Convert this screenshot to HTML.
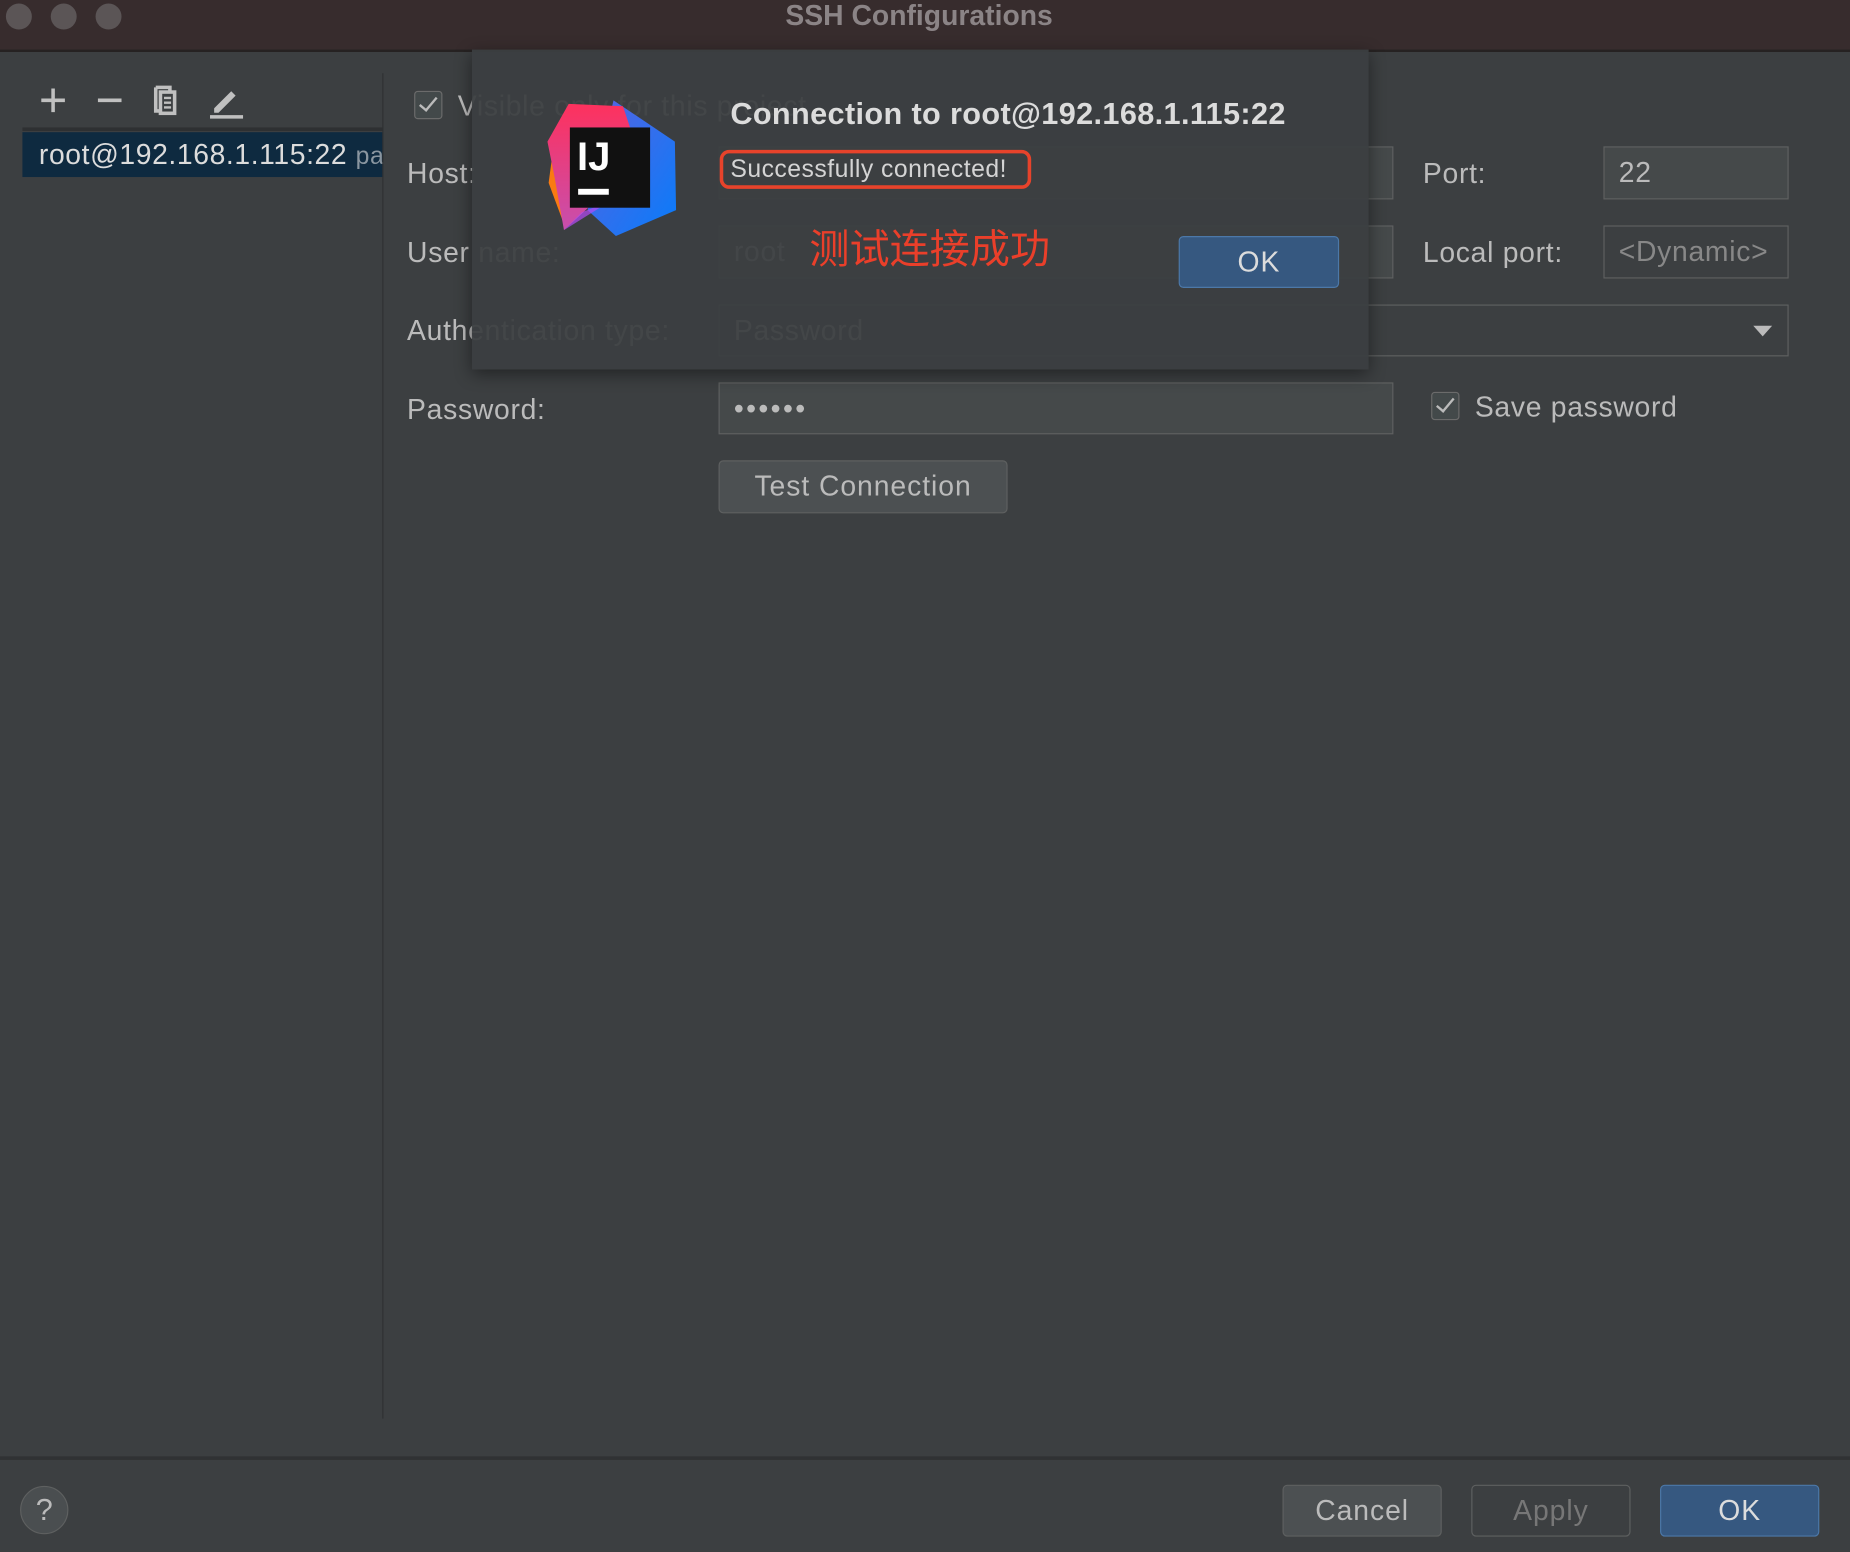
<!DOCTYPE html>
<html><head><meta charset="utf-8"><style>
html,body{margin:0;padding:0;width:1850px;height:1552px;overflow:hidden;background:#3c3f41;}
#s{position:absolute;left:0;top:0;width:1568px;height:1315px;transform:scale(1.17985,1.1802);transform-origin:0 0;background:#3c3f41;font-family:"Liberation Sans","Noto Sans CJK SC",sans-serif;color:#bbbbbb;}
.a{position:absolute;}
.lbl{position:absolute;font-size:24px;line-height:28px;color:#bbbbbb;letter-spacing:0.6px;}
.fld{position:absolute;background:#45494a;border:1.5px solid #5e6060;box-sizing:border-box;font-size:24px;line-height:44px;padding-left:12px;color:#bbbbbb;letter-spacing:0.6px;}
.btn{position:absolute;box-sizing:border-box;border:1.5px solid #5e6060;border-radius:4px;background:#4c5052;font-size:24px;text-align:center;line-height:43px;color:#bbbbbb;letter-spacing:0.8px;}
.cb{position:absolute;width:24px;height:24px;border:1.5px solid #6b6b6b;border-radius:3px;background:#43494a;box-sizing:border-box;}
.cb:after{content:"";position:absolute;left:7px;top:1px;width:6px;height:13px;border-right:2px solid #bbb;border-bottom:2px solid #bbb;transform:rotate(40deg);}
</style></head><body><div id="s">
<div class="a" style="left:0;top:0;width:1568px;height:42px;background:#372c2d;border-bottom:2px solid #262222;"></div>
<div class="a" style="left:5px;top:3px;width:22px;height:22px;border-radius:50%;background:#5b5556"></div>
<div class="a" style="left:43px;top:3px;width:22px;height:22px;border-radius:50%;background:#5b5556"></div>
<div class="a" style="left:81px;top:3px;width:22px;height:22px;border-radius:50%;background:#5b5556"></div>
<div class="a" style="left:0;top:0;width:1558px;text-align:center;font-size:24px;font-weight:bold;line-height:28px;color:#8b8486">SSH Configurations</div>

<svg class="a" style="left:30px;top:70px" width="190" height="32" viewBox="0 0 190 32">
<g stroke="#c0c0c0" stroke-width="3" fill="none">
<path d="M5 15h20M15 5v20"/><path d="M53 15h20"/>
<path d="M102 4h12v3M102 4v20h3"/>
<rect x="106" y="8" width="12" height="18" fill="#3c3f41"/>
<path d="M109 13h6M109 17h6M109 21h6" stroke-width="2"/>
<path d="M152 22l14-14 3 3-14 14h-3z" fill="#c0c0c0" stroke-width="1"/>
<path d="M148 29h28"/>
</g></svg>
<div class="a" style="left:19px;top:108px;width:306px;height:3px;background:#2e3032"></div>
<div class="a" style="left:19px;top:112px;width:306px;height:38px;background:#0e2a40;overflow:hidden;white-space:nowrap;font-size:24px;line-height:40px;color:#dcdcdc;padding-left:14px;box-sizing:border-box;letter-spacing:0.5px">root@192.168.1.115:22 <span style="color:#8a96a0;font-size:21px">password</span></div>
<div class="a" style="left:324px;top:62px;width:1px;height:1140px;background:#2f3133"></div>

<div class="cb" style="left:351px;top:77px"></div>
<div class="lbl" style="left:388px;top:77px">Visible only for this project</div>
<div class="lbl" style="left:345px;top:134px">Host:</div>
<div class="fld" style="left:609px;top:124px;width:572px;height:45px"></div>
<div class="lbl" style="left:1206px;top:134px">Port:</div>
<div class="fld" style="left:1359px;top:124px;width:157px;height:45px">22</div>
<div class="lbl" style="left:345px;top:201px">User name:</div>
<div class="fld" style="left:609px;top:191px;width:572px;height:45px">root</div>
<div class="lbl" style="left:1206px;top:201px">Local port:</div>
<div class="fld" style="left:1359px;top:191px;width:157px;height:45px;background:#3c3f41;color:#888">&lt;Dynamic&gt;</div>
<div class="lbl" style="left:345px;top:267px">Authentication type:</div>
<div class="fld" style="left:609px;top:258px;width:907px;height:44px;background:#3c3f41">Password</div>
<div class="a" style="left:1486px;top:276px;width:0;height:0;border-left:8px solid transparent;border-right:8px solid transparent;border-top:9px solid #bbb"></div>
<div class="lbl" style="left:345px;top:334px">Password:</div>
<div class="fld" style="left:609px;top:324px;width:572px;height:44px;letter-spacing:2px">••••••</div>
<div class="cb" style="left:1213px;top:332px"></div>
<div class="lbl" style="left:1250px;top:332px">Save password</div>
<div class="btn" style="left:609px;top:390px;width:245px;height:45px">Test Connection</div>

<div class="a" style="left:400px;top:42px;width:760px;height:271px;background:rgba(60,63,65,0.94);box-shadow:0 4px 14px rgba(0,0,0,0.45)"></div>
<svg class="a" style="left:458px;top:80px" width="120" height="122" viewBox="0 0 120 122">
<defs><linearGradient id="g1" x1="0" y1="0" x2="1" y2="1"><stop offset="0" stop-color="#5a62e0"/><stop offset="1" stop-color="#087cfa"/></linearGradient>
<linearGradient id="g2" x1="0" y1="0" x2="0" y2="1"><stop offset="0" stop-color="#fe315d"/><stop offset="1" stop-color="#c74fae"/></linearGradient></defs>
<polygon points="62,5 114,40 115,98 64,120 40,98" fill="url(#g1)"/>
<polygon points="11,45 7,75 20,110 55,85" fill="#f97a12"/>
<polygon points="24,8 70,10 85,55 20,115 12,70 6,40" fill="url(#g2)"/>
<polygon points="35,100 20,115 60,90" fill="#b74af7" opacity=".7"/>
<rect x="25" y="28" width="68" height="68" fill="#111"/>
<text x="31" y="64" font-family="Liberation Sans" font-weight="bold" font-size="34" fill="#fff">IJ</text>
<rect x="32" y="80" width="26" height="5" fill="#fff"/>
</svg>
<div class="a" style="left:619px;top:81px;font-size:26px;font-weight:bold;color:#dcdcdc;line-height:30px;letter-spacing:0.3px">Connection to root@192.168.1.115:22</div>
<div class="a" style="left:610px;top:127px;width:264px;height:33px;border:3px solid #e7432b;border-radius:8px;box-sizing:border-box"></div>
<div class="a" style="left:619px;top:131px;font-size:21px;color:#d4d4d4;line-height:26px;letter-spacing:0.4px">Successfully connected!</div>
<div class="a" style="left:686px;top:188px;font-size:34px;color:#ea3f2a;line-height:42px;font-family:'Noto Sans CJK SC',sans-serif">测试连接成功</div>
<div class="btn" style="left:999px;top:200px;width:136px;height:44px;background:#365880;border-color:#4c78a8;color:#dcdcdc">OK</div>

<div class="a" style="left:0;top:1234px;width:1568px;height:3px;background:#303234"></div>
<div class="a" style="left:17px;top:1259px;width:41px;height:41px;border-radius:50%;background:#4a4e50;border:1.5px solid #5e6060;box-sizing:border-box;text-align:center;font-size:26px;line-height:38px;color:#bbb">?</div>
<div class="btn" style="left:1087px;top:1258px;width:135px;height:44px">Cancel</div>
<div class="btn" style="left:1247px;top:1258px;width:135px;height:44px;background:#3c3f41;color:#777">Apply</div>
<div class="btn" style="left:1407px;top:1258px;width:135px;height:44px;background:#365880;border-color:#4c78a8;color:#dcdcdc">OK</div>
</div></body></html>
